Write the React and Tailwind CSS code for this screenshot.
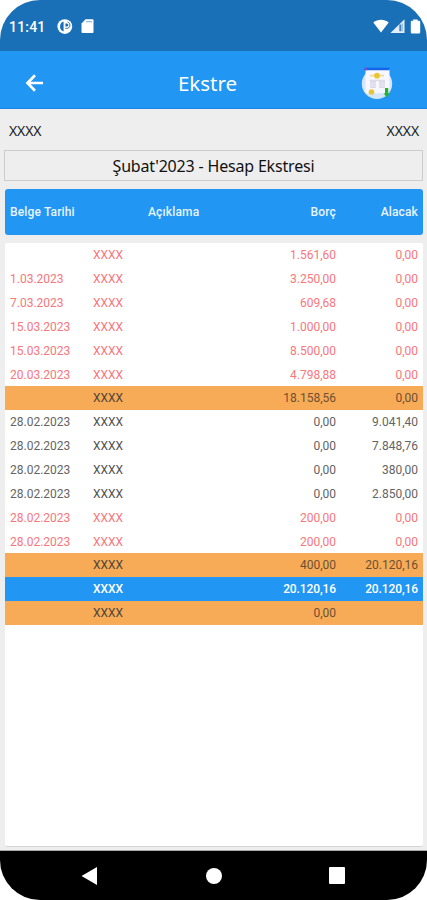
const entries = [
  ['', '1.561,60', '0,00', 'debit'],
  ['1.03.2023', '3.250,00', '0,00', 'debit'],
  ['7.03.2023', '609,68', '0,00', 'debit'],
  ['15.03.2023', '1.000,00', '0,00', 'debit'],
  ['15.03.2023', '8.500,00', '0,00', 'debit'],
  ['20.03.2023', '4.798,88', '0,00', 'debit'],
  ['', '18.158,56', '0,00', 'subtotal'],
  ['28.02.2023', '0,00', '9.041,40', 'credit'],
  ['28.02.2023', '0,00', '7.848,76', 'credit'],
  ['28.02.2023', '0,00', '380,00', 'credit'],
  ['28.02.2023', '0,00', '2.850,00', 'credit'],
  ['28.02.2023', '200,00', '0,00', 'debit'],
  ['28.02.2023', '200,00', '0,00', 'debit'],
  ['', '400,00', '20.120,16', 'subtotal'],
  ['', '20.120,16', '20.120,16', 'total'],
  ['', '0,00', '', 'subtotal'],
];

const rowStyles = {
  debit: 'text-[#f9767c]',
  credit: 'text-[#646464]',
  subtotal: 'bg-[#f8ab57] text-[#6b5034]',
  total: 'bg-[#2196f3] text-white font-medium tracking-[-0.1px]',
};

const descriptionStyles = {
  debit: '',
  credit: 'text-[#505050]',
  subtotal: 'text-[#4e4439]',
  total: '',
};

function StatusBar() {
  return (
    <div className="flex h-[51px] items-center justify-between bg-[#1a70b7] pt-[2px] pr-[6px] pl-[9px] text-white">
      <div className="flex items-center">
        <span className="w-[48px] font-['Roboto',sans-serif] text-[14px] leading-4 font-medium tracking-[0.2px]">11:41</span>
        <svg className="h-4 w-4" viewBox="0 0 16 16">
          <circle cx="7.8" cy="7.6" r="7.4" fill="#fff" />
          <path d="M6.6 2.6a5.3 5.3 0 0 0 0 10z" fill="#1a70b7" />
          <path d="M8.4 4.4h1.4a1.5 1.5 0 0 1 0 3.2H8.4z" fill="#1a70b7" />
          <path d="M10.6 2.9c3 1.500 3 5.200.2 6.400H8.400" fill="none" stroke="#1a70b7" strokeWidth="1" />
        </svg>
        <svg className="ml-[8px] h-[15px] w-[13px]" viewBox="0 0 13 15">
          <path d="M4.500.3h7q1 0 1 1v11.800q0 1-1 1h-10q-1 0-1-1V4.500z" fill="#fff" />
          <path d="M5 2.600h6" stroke="#8fb9dd" strokeWidth="1.200" />
        </svg>
      </div>
      <div className="flex items-center">
        <svg className="h-4 w-4" viewBox="0 0 16 16">
          <path d="M.3 3.400C4.600 0 11.400 0 15.700 3.400L8 13.600z" fill="#fff" />
        </svg>
        <svg className="ml-[1px] h-4 w-[15px]" viewBox="0 0 15 16">
          <path d="M14.500.3v13.600H.4z" fill="#e4eef8" />
          <path d="M10.300 5.600v6.600" stroke="#3f83c0" strokeWidth="2" />
          <path d="M12.200 4.300v8" stroke="#7eadd6" strokeWidth="1" />
        </svg>
        <svg className="ml-[5px] h-[16px] w-[11px]" viewBox="0 0 11 16">
          <path d="M3.200.4h4.400v1.400H9q1.200 0 1.200 1.200v10.200q0 1.200-1.200 1.200H2q-1.200 0-1.200-1.200V3Q.8 1.800 2 1.800h1.200z" fill="#fff" />
        </svg>
      </div>
    </div>
  );
}

function StatementIcon() {
  return (
    <svg className="h-8 w-8" viewBox="0 0 32 32">
      <circle cx="16" cy="16.700" r="15.200" fill="#d3e5fb" />
      <path d="M4.500 2.200h24v19l-3 5h-21z" fill="#f8f7ff" />
      <path d="M3.500.8h25v2.400h-25z" fill="#1465e8" />
      <path d="M3.500.7h2.500v2.600h-2.500z" fill="#7a4fd0" />
      <path d="M9 8.600h14" stroke="#f0dfae" strokeWidth="2.200" />
      <circle cx="16" cy="8.700" r="2.900" fill="#eac72e" />
      <path d="M8.500 13.500h15.500" stroke="#dcdbe8" strokeWidth="1.400" />
      <path d="M9 14h6v7H9zM18 14h6v7h-6z" fill="#dcdbe8" />
      <path d="M9 16.200h6M9 18.700h6M18 16.200h6M18 18.700h6" stroke="#ebeaf4" strokeWidth=".8" />
      <circle cx="10.500" cy="25" r="2.800" fill="#e7c534" />
      <path d="M24 21h3.200v5.500h1.500l-3.100 3.600-3.100-3.600H24z" fill="#25b32b" />
    </svg>
  );
}

function Header() {
  return (
    <header className="grid h-[58px] grid-cols-[80px_1fr_80px] items-center border-b border-[#1b86df] bg-[#2196f3] pt-[7px]">
      <svg className="ml-[25px] h-[18px] w-[19px]" viewBox="0 0 19 18" fill="none" stroke="#fff" strokeWidth="2.700">
        <path d="M18 9H2.500M10 1.200 2.500 9l7.500 7.800" />
      </svg>
      <h1 className="-ml-[12px] text-center text-[20.5px] leading-6 text-white">Ekstre</h1>
      <div className="ml-[14px]">
        <StatementIcon />
      </div>
    </header>
  );
}

function NavigationBar() {
  return (
    <nav className="flex h-[49px] items-center bg-black pl-[81px]">
      <svg className="h-[18px] w-[16px]" viewBox="0 0 16 18">
        <path d="M16 0v18L.5 9z" fill="#fff" />
      </svg>
      <div className="ml-[109px] h-4 w-4 rounded-full bg-white" />
      <div className="ml-[107px] h-[17px] w-4 rounded-[1px] bg-white" />
    </nav>
  );
}

export default function App() {
  return (
    <div className="h-[900px] w-[427px] bg-white">
      <div className="flex h-full flex-col overflow-hidden rounded-[40px] bg-[#eeeeee] font-['Noto_Sans',sans-serif]">
        <StatusBar />
        <Header />
        <main className="flex min-h-0 flex-1 flex-col border-b border-[#aaaaaa] px-[4px] pb-[3px]">
          <div className="flex h-[41px] items-center justify-between pt-px pr-[4px] pl-[5px] text-[14px] tracking-[-0.1px] text-[#222]">
            <span>XXXX</span>
            <span>XXXX</span>
          </div>
          <div className="flex h-[31px] items-center justify-center border border-[#cccccc] pt-px text-[16px] tracking-[-0.18px] text-[#111]">
            <span>Şubat'2023 - Hesap Ekstresi</span>
          </div>
          <div className="mt-[8px] ml-px flex h-[46px] items-center rounded-[3px] bg-[#2196f3] px-[5px] font-['Roboto',sans-serif] text-[12px] font-medium tracking-[0.15px] text-[#e8f4ff]">
            <span className="w-[138px]">Belge Tarihi</span>
            <span className="flex-1">Açıklama</span>
            <span className="w-[60px] text-right">Borç</span>
            <span className="w-[82px] text-right">Alacak</span>
          </div>
          <div className="mt-[8px] ml-px flex-1 rounded-[2px] border-b border-[#d5d5d5] bg-white font-['Roboto',sans-serif] text-[12px]">
            {entries.map(([date, debit, credit, kind], i) => (
              <div key={i} className={`flex h-[23.85px] items-center px-[5px] pt-px ${rowStyles[kind]}`}>
                <span className="w-[83px]">{date}</span>
                <span className={`flex-1 ${descriptionStyles[kind]}`}>XXXX</span>
                <span className="w-[80px] text-right">{debit}</span>
                <span className="w-[82px] text-right">{credit}</span>
              </div>
            ))}
          </div>
        </main>
        <NavigationBar />
      </div>
    </div>
  );
}
